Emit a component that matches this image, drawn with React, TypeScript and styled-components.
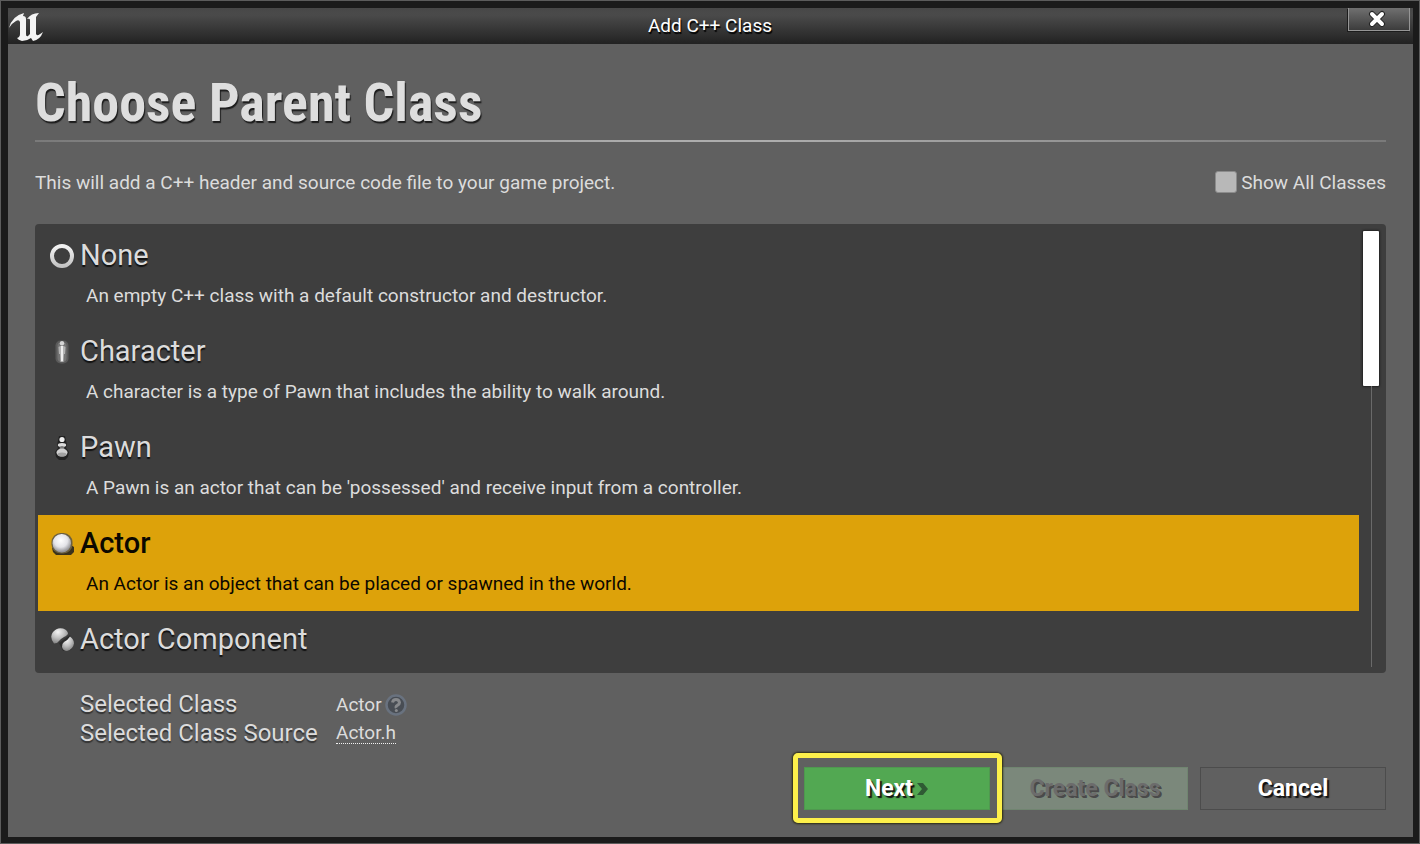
import React from 'react';
import styled, { createGlobalStyle } from 'styled-components';

const GlobalStyle = createGlobalStyle`
  * { box-sizing: border-box; }
  html, body, #root { height: 100%; margin: 0; }
  body { background: #1b1b1b; font-family: Roboto, "Liberation Sans", sans-serif; font-size: 19px; color: #dcdcdc; }
  h1, h2, p, ul, dl, dd, dt { margin: 0; padding: 0; font-weight: 400; }
  button { font-family: inherit; }
`;

const Window = styled.main`
  min-height: 100%;
  display: flex;
  flex-direction: column;
  padding: 7px 6px 6px 7px;
  border: 1px solid #5c5c5c;
  background: #1b1b1b;
`;

const TitleBar = styled.header`
  display: grid;
  grid-template-columns: 64px 1fr 65px;
  height: 36px;
  background: linear-gradient(#484848, #4a4a4a 20%, #222);
`;

const Logo = styled.svg`
  width: 36px;
  height: 36px;
`;

const WindowTitle = styled.h2`
  text-align: center;
  font-size: 19px;
  line-height: 36px;
  color: #fff;
  text-shadow: 1px 2px 1px #000;
`;

const CloseButton = styled.button`
  display: flex;
  align-items: center;
  justify-content: center;
  width: 62px;
  height: 23px;
  padding: 0 4px 0 0;
  border: 1px solid #969696;
  border-top: 0;
  background: linear-gradient(#707070, #3c3c3c);
  box-shadow: -1px 1px 0 #1c1c1c;
`;

const Body = styled.section`
  flex: 1;
  display: flex;
  flex-direction: column;
  padding: 27px;
  background: #606060;
`;

const Heading = styled.h1`
  padding-bottom: 5px;
  font-family: "Roboto Condensed", Roboto, sans-serif;
  font-size: 54px;
  line-height: 64px;
  font-weight: 700;
  color: #dedede;
  text-shadow: 1px 2px 1px #1c1c1c;
`;

const Rule = styled.div`
  height: 2px;
  background: linear-gradient(90deg, #7a7a7a, #adadad 45%, #adadad 55%, #7a7a7a);
`;

const IntroRow = styled.div`
  display: flex;
  align-items: center;
  justify-content: space-between;
  height: 80px;
  margin-bottom: 2px;
`;

const CheckLabel = styled.label`
  display: flex;
  align-items: center;
  gap: 4px;
`;

const CheckBox = styled.input`
  appearance: none;
  width: 22px;
  height: 22px;
  margin: 0;
  border: 1px solid #8c8c8c;
  border-radius: 3px;
  background: #b8b8b8;
`;

const ListPanel = styled.div`
  display: flex;
  height: 449px;
  padding: 3px 7px 0 3px;
  border-radius: 4px;
  background: #3e3e3e;
  overflow: hidden;
`;

const ClassList = styled.ul`
  flex: 1;
  list-style: none;
`;

const ClassRow = styled.li<{ $selected?: boolean }>`
  height: 96px;
  padding: 8px 12px;
  background: ${p => (p.$selected ? '#dda20a' : 'transparent')};
  color: ${p => (p.$selected ? '#0c0800' : '#dcdcdc')};
`;

const ClassName = styled.h2<{ $selected?: boolean }>`
  display: flex;
  align-items: center;
  gap: 6px;
  font-size: 29px;
  line-height: 41px;
  font-weight: ${p => (p.$selected ? 500 : 400)};
  text-shadow: ${p => (p.$selected ? 'none' : '0 2px 1px #111')};
`;

const ClassIcon = styled.svg`
  width: 24px;
  height: 24px;
`;

const ClassText = styled.p`
  padding-left: 36px;
  line-height: 40px;
`;

const ScrollBar = styled.div`
  display: flex;
  flex-direction: column;
  align-items: center;
  width: 16px;
  margin: 4px 0 6px 4px;
`;

const ScrollThumb = styled.div`
  width: 16px;
  height: 155px;
  border-radius: 1px;
  background: #fff;
  box-shadow: 0 0 2px 1px #222;
`;

const ScrollTrack = styled.div`
  flex: 1;
  width: 1px;
  background: #6a6a6a;
`;

const Details = styled.dl`
  display: grid;
  grid-template-columns: 256px 1fr;
  align-items: center;
  padding: 17px 0 0 45px;
  line-height: 29px;
`;

const DetailTerm = styled.dt`
  font-size: 24px;
  text-shadow: 0 2px 1px #333;
`;

const DetailValue = styled.dd`
  display: flex;
  align-items: center;
  gap: 3px;
`;

const SourceLink = styled.a`
  color: inherit;
  line-height: 20px;
  text-decoration: none;
  border-bottom: 1px dotted #f0f0f0;
`;

const HelpButton = styled.button`
  display: flex;
  padding: 0;
  border: 0;
  background: none;
`;

const Actions = styled.footer`
  display: flex;
  justify-content: flex-end;
  gap: 12px;
  margin-top: auto;
`;

const tones = {
  primary: { bg: '#52a852', edge: '#4f984f', text: '#fff', shadow: '2px 2px 1px #111' },
  disabled: { bg: '#7b887b', edge: '#708570', text: '#6c6c6c', shadow: '2px 2px 0 #4a4a4a' },
  plain: { bg: '#606060', edge: '#4c4c4c', text: '#fff', shadow: '2px 2px 1px #111' },
};

const ActionButton = styled.button<{ $tone: keyof typeof tones }>`
  position: relative;
  display: flex;
  align-items: center;
  justify-content: center;
  gap: 4px;
  width: 186px;
  height: 43px;
  padding: 0;
  border: 1px solid ${p => tones[p.$tone].edge};
  background: ${p => tones[p.$tone].bg};
  color: ${p => tones[p.$tone].text};
  font-size: 23px;
  font-weight: 700;
  text-shadow: ${p => tones[p.$tone].shadow};
`;

const FocusFrame = styled.span`
  position: absolute;
  inset: -15px -13px -14px -12px;
  z-index: 1;
  border: 5px solid #fdf04a;
  border-radius: 5px;
  box-shadow: 0 0 2px 1px #2c2a10;
`;

const NoneIcon = () => (
  <ClassIcon viewBox="0 0 24 24">
    <defs>
      <linearGradient id="ring" x2="0" y2="1"><stop stopColor="#f2f2f2" /><stop offset="1" stopColor="#c4c4c4" /></linearGradient>
    </defs>
    <circle cx="12" cy="12" r="10" fill="none" stroke="url(#ring)" strokeWidth="4" />
  </ClassIcon>
);

const CharacterIcon = () => (
  <ClassIcon viewBox="0 0 24 24">
    <rect x="5.5" y="0.5" width="13" height="23" rx="5" fill="#5a5a5a" />
    <rect x="7.5" y="2" width="9" height="20" rx="4" fill="#747474" />
    <circle cx="12" cy="3.2" r="2.2" fill="#d4d4d4" />
    <path d="M8.5 7Q12 4.5 15.5 7L15 14H14L13.5 22H10.5L10 14H9Z" fill="#b2b2b2" />
    <path d="M11 6h2v15h-2z" fill="#ececec" />
  </ClassIcon>
);

const PawnIcon = () => (
  <ClassIcon viewBox="0 0 24 24">
    <path d="M9 0h6l2 9-1 3 3 4-1 5-3 3H9l-3-3-1-5 3-4-1-3z" fill="#1c1c1c" opacity="0.8" />
    <circle cx="12" cy="3.5" r="2.6" fill="#eee" />
    <ellipse cx="12" cy="9" rx="4.2" ry="2" fill="#dcdcdc" />
    <ellipse cx="12" cy="12" rx="2.5" ry="2" fill="#777" />
    <ellipse cx="12" cy="16.5" rx="5.5" ry="4" fill="#d0d0d0" />
    <ellipse cx="12" cy="18.5" rx="4.5" ry="2" fill="#a2a2a2" />
  </ClassIcon>
);

const ActorIcon = () => (
  <ClassIcon viewBox="0 0 24 24">
    <defs>
      <radialGradient id="ball" cx="0.45" cy="0.35" r="0.6"><stop stopColor="#fff" /><stop offset="0.6" stopColor="#e4e4e8" /><stop offset="1" stopColor="#98989c" /></radialGradient>
    </defs>
    <path d="M2 16l1 4 3 3h15l3-3v-5l-3-2z" fill="#3a321c" />
    <rect x="1.5" y="1" width="21" height="20.5" rx="9" fill="#6c6040" />
    <rect x="2.5" y="2" width="18.5" height="18.5" rx="9" fill="url(#ball)" />
  </ClassIcon>
);

const ComponentIcon = () => (
  <ClassIcon viewBox="0 0 24 24">
    <defs>
      <radialGradient id="shade" cx="0.4" cy="0.25" r="0.8"><stop stopColor="#f4f4f4" /><stop offset="0.5" stopColor="#c0c0c0" /><stop offset="1" stopColor="#7c7c7c" /></radialGradient>
    </defs>
    <path d="M9 15l4 8 8-1 3-7-4-8z" fill="#222" opacity="0.6" />
    <path d="M4 15.5Q-1 9 3 4T13 .5Q18 2 18 6L16 8L14 9L11 11L9 13L7 15Z" fill="url(#shade)" />
    <path d="M20 8.5q4 3 4 7-1 6-7 7.5-4 0-5-4-.5-3 2-5 4-2 6-5.5z" fill="url(#shade)" />
  </ClassIcon>
);

const classes = [
  { name: 'None', text: 'An empty C++ class with a default constructor and destructor.', Icon: NoneIcon },
  { name: 'Character', text: 'A character is a type of Pawn that includes the ability to walk around.', Icon: CharacterIcon },
  { name: 'Pawn', text: "A Pawn is an actor that can be 'possessed' and receive input from a controller.", Icon: PawnIcon },
  { name: 'Actor', text: 'An Actor is an object that can be placed or spawned in the world.', Icon: ActorIcon, selected: true },
  { name: 'Actor Component', text: '', Icon: ComponentIcon },
];

export default function App() {
  return (
    <>
      <GlobalStyle />
      <Window>
        <TitleBar>
          <Logo viewBox="0 0 36 36" aria-label="Unreal">
            <path
              d="M1 20Q4 8 16 5L15 8Q18 8 18 11V26Q18 29 20 28L22 26V12Q22 10 19 11Q23 5 31 5L28 9V26Q29 29 35 24Q32 32 25 33L23 30Q19 33 14 33Q10 32 9 30Q12 29 12 26V14Q11 11 8 13Q4 15 1 20Z"
              fill="#f4f4f4"
            />
          </Logo>
          <WindowTitle>Add C++ Class</WindowTitle>
          <CloseButton aria-label="Close">
            <svg width="18" height="18" viewBox="0 0 18 18">
              <path d="M4 4L14 14M14 4L4 14" stroke="#222" strokeWidth="6" strokeLinecap="round" />
              <path d="M4 4L14 14M14 4L4 14" stroke="#fff" strokeWidth="4" strokeLinecap="round" />
            </svg>
          </CloseButton>
        </TitleBar>
        <Body>
          <Heading>Choose Parent Class</Heading>
          <Rule />
          <IntroRow>
            <p>This will add a C++ header and source code file to your game project.</p>
            <CheckLabel>
              <CheckBox type="checkbox" />
              Show All Classes
            </CheckLabel>
          </IntroRow>
          <ListPanel>
            <ClassList>
              {classes.map(({ name, text, Icon, selected }) => (
                <ClassRow key={name} $selected={selected}>
                  <ClassName $selected={selected}>
                    <Icon />
                    {name}
                  </ClassName>
                  {text && <ClassText>{text}</ClassText>}
                </ClassRow>
              ))}
            </ClassList>
            <ScrollBar>
              <ScrollThumb />
              <ScrollTrack />
            </ScrollBar>
          </ListPanel>
          <Details>
            <DetailTerm>Selected Class</DetailTerm>
            <DetailValue>
              Actor
              <HelpButton aria-label="Help">
                <svg width="22" height="22" viewBox="0 0 22 22">
                  <circle cx="11" cy="11" r="9.5" fill="#484d54" stroke="#69727f" strokeWidth="2.5" />
                  <path d="M7.5 8.5Q8 5.5 11 5.5T14.5 8.5Q14.5 10 12.5 11.3T11.3 14" fill="none" stroke="#87898c" strokeWidth="3" />
                  <circle cx="11.3" cy="16.5" r="1.5" fill="#87898c" />
                </svg>
              </HelpButton>
            </DetailValue>
            <DetailTerm>Selected Class Source</DetailTerm>
            <DetailValue>
              <SourceLink href="#source">Actor.h</SourceLink>
            </DetailValue>
          </Details>
          <Actions>
            <ActionButton $tone="primary">
              Next
              <svg width="12" height="14" viewBox="0 0 12 14">
                <path d="M0 1H6L11 7L6 13H0L5 7Z" fill="#2f5a34" />
              </svg>
              <FocusFrame />
            </ActionButton>
            <ActionButton $tone="disabled" disabled>Create Class</ActionButton>
            <ActionButton $tone="plain">Cancel</ActionButton>
          </Actions>
        </Body>
      </Window>
    </>
  );
}
